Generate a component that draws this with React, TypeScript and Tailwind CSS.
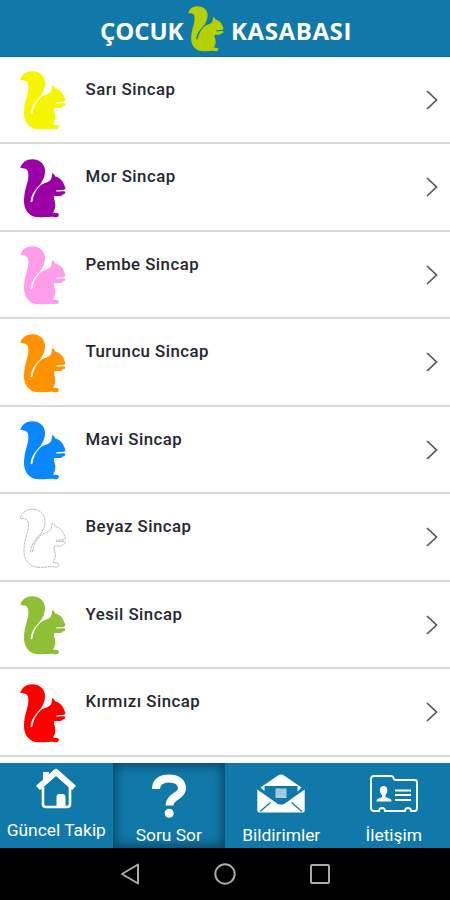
const SQUIRREL =
  "M.3 9C2 3.500 6.500 .2 12.500 .2 20 .2 25.600 5 25.600 12 25.600 16.500 24 20.500 21.200 24.500 17.500 29 11.500 34 10.800 42.500Q11.500 43.800 12.700 42.500C14 35 17 30 21.500 26 25 23.700 29.500 23.500 31.500 20.500 32.800 18.500 32 16.500 33.300 14 34.500 14.600 35 16 36 17.400 41 18.500 44 22 45.200 26 45.600 27.500 46.700 28.700 46.300 30 45 31.300 42 30.900 37 31.300V32.400C40.500 32.700 43 32.200 45.800 32.400 46.700 33.300 46.300 34.600 45.300 34.900 43.500 35.100 43 36.700 41 37H35C34.200 38.700 35 40.200 35.600 42.500 36.600 46.500 36.200 50 33.800 53.400 36 54.300 38.600 53.200 39.600 54.900 39.900 56.700 38.900 58 37.200 58.200 35 58.400 34 57.600 32 57.700 28.500 57.900 26 58.300 21.500 58.300 15.500 58.600 11 57.200 7.800 53.200 4.600 49.200 3.600 44.500 4.300 38 4.700 31 7.200 26 8.200 20.500 9 15.500 8.800 11 5.300 9.800 3.600 9.200 2 9.400 .3 9Z";

type SquirrelProps = {
  color: string;
  outline?: boolean;
  className?: string;
};

function Squirrel({ color, outline, className }: SquirrelProps) {
  return (
    <svg viewBox="0 0 47 58" overflow="visible" preserveAspectRatio="none" className={className}>
      <path
        d={SQUIRREL}
        fill={color}
        stroke={outline ? "#aaa" : "none"}
        strokeWidth={0.8}
        strokeDasharray={outline ? "3 .6" : undefined}
      />
    </svg>
  );
}

const groups = [
  { name: "Sarı Sincap", color: "#f5f500" },
  { name: "Mor Sincap", color: "#9a00a5" },
  { name: "Pembe Sincap", color: "#ff9deb" },
  { name: "Turuncu Sincap", color: "#ff9200" },
  { name: "Mavi Sincap", color: "#0a87ff" },
  { name: "Beyaz Sincap", color: "#ffffff", outline: true },
  { name: "Yesil Sincap", color: "#8fbf36" },
  { name: "Kırmızı Sincap", color: "#ff0000" },
];

function HomeIcon() {
  return (
    <svg width="42" height="42" viewBox="0 0 42 42" fill="none">
      <path d="M8 20v17q0 3 3 3h21q3 0 3-3V20" stroke="#fff" strokeWidth="2.600" />
      <path d="M3 21 21 5l18 16" stroke="#fff" strokeWidth="6" strokeLinejoin="round" />
      <path d="M8 5h6v7l-6 5Z" fill="#fff" />
      <path d="M21.500 39v-9q0-3 3-3h3q3 0 3 3v9Z" fill="#fff" />
    </svg>
  );
}

function QuestionIcon() {
  return (
    <svg width="34" height="44" viewBox="0 0 34 44" fill="none">
      <path d="M4 15C4 7.500 9.500 4.500 17 4.500S30 8 30 14.500c0 8-12.500 7.500-12.500 17" stroke="#fff" strokeWidth="8" />
      <circle cx="17.200" cy="39.300" r="4.500" fill="#fff" />
    </svg>
  );
}

function MailIcon() {
  return (
    <svg width="48" height="39" viewBox="0 0 48 39">
      <path d="M3.500 13.500 21 1.500q3-2 6 0l17.500 12-4 4V12h-33v5Z" fill="#fff" />
      <path d="M.3 15.500 18 28q6 5.500 12 0l17.700-12.500V36.500q0 2-2 2H2.300q-2 0-2-2Z" fill="#fff" />
      <path d="M18.500 14.500h11v9.500h-11Z" fill="#a9cfe1" />
      <path d="M18.500 17h11M18.500 20h11" stroke="#7fb4cf" strokeWidth=".7" />
      <path d="m3 37.500 10.500-9M45 37.500l-10.500-9" stroke="#1179aa" strokeWidth="1.300" />
    </svg>
  );
}

function CardIcon() {
  return (
    <svg width="48" height="38" viewBox="0 0 48 38" fill="none">
      <path
        d="M4 1h17q2 0 2.500 2t2.500 2h18.500q2.500 0 2.500 2.500V33q0 3-2.500 3H41q0-3-3-3t-3 3H15q0-3-3-3t-3 3H4q-3 0-3-3V4q0-3 3-3Z"
        stroke="#fff"
        strokeWidth="1.900"
      />
      <path d="M13.500 11c5 0 4.700 6.500 2 9v2l5 2q1 .5 1 2.500H6.500q0-2 1-2.500l4.500-2v-2c-3-2.500-3-9 1.500-9Z" fill="#fff" />
      <path d="M25 15.500h16M25 20h16M25 25h16" stroke="#fff" strokeWidth="1.800" />
    </svg>
  );
}

const tabs = [
  { label: "Güncel Takip", icon: <HomeIcon />, pad: "pt-[4px]", iconBox: "h-[50px]", active: false },
  { label: "Soru Sor", icon: <QuestionIcon />, pad: "pt-[11px]", iconBox: "h-[50px]", active: true },
  { label: "Bildirimler", icon: <MailIcon />, pad: "pt-[11px]", iconBox: "h-[50px]", active: false },
  { label: "İletişim", icon: <CardIcon />, pad: "pt-[12px]", iconBox: "h-[49px]", active: false },
];

export default function App() {
  return (
    <div className="flex h-[900px] w-[450px] flex-col overflow-hidden bg-white font-['Roboto',sans-serif]">
      <header className="flex h-[56.5px] shrink-0 items-start border-b border-[#0b6d9d] bg-[#1179aa] pl-[100px] pt-[6px] font-['Open_Sans',sans-serif] text-[24px] font-bold leading-[50px] text-white">
        <span className="w-[88px] whitespace-nowrap tracking-[-0.100px]">ÇOCUK</span>
        <Squirrel color="#b5d000" className="h-[45px] w-[36px] shrink-0" />
        <span className="ml-[7px] whitespace-nowrap tracking-[0.600px]">KASABASI</span>
      </header>

      <main className="flex-1 overflow-hidden">
        {groups.map((group) => (
          <div
            key={group.name}
            className="flex h-[87.55px] items-start border-b-[2.500px] border-[#d9d9d9] pl-5 pr-[11px]"
          >
            <Squirrel color={group.color} outline={group.outline} className="mt-[14.500px] h-[58px] w-[46px] shrink-0" />
            <span className="ml-[19.500px] mt-[20px] flex-1 text-[16.800px] font-medium leading-6 tracking-[0.480px] text-[#24262f]">
              {group.name}
            </span>
            <svg width="14" height="22" viewBox="0 0 14 22" fill="none" className="mt-[32px]">
              <path d="m2 2 9.500 9L2 20" stroke="#555" strokeWidth="1.700" />
            </svg>
          </div>
        ))}
      </main>

      <nav className="grid h-[85px] shrink-0 grid-cols-4 bg-[#1179aa]">
        {tabs.map((tab) => (
          <div
            key={tab.label}
            className={`flex flex-col items-center overflow-hidden text-white ${tab.pad} ${
              tab.active ? "shadow-[inset_0_0_12px_2px_#08425f]" : ""
            }`}
          >
            <div className={tab.iconBox}>{tab.icon}</div>
            <span className="whitespace-nowrap text-[17.400px] leading-[26px]">{tab.label}</span>
          </div>
        ))}
      </nav>

      <footer className="flex h-[52px] shrink-0 items-center justify-center gap-[73px] bg-black">
        <svg width="22" height="22" viewBox="0 0 22 22" fill="none" stroke="#aaa" strokeWidth="2">
          <path d="M19 1.500v19L3 11Z" strokeLinejoin="round" />
        </svg>
        <svg width="22" height="22" viewBox="0 0 22 22" fill="none" stroke="#aaa" strokeWidth="2">
          <circle cx="11" cy="11" r="9.700" />
        </svg>
        <svg width="22" height="22" viewBox="0 0 22 22" fill="none" stroke="#aaa" strokeWidth="2">
          <rect x="2" y="2" width="18" height="18" rx="1" />
        </svg>
      </footer>
    </div>
  );
}
